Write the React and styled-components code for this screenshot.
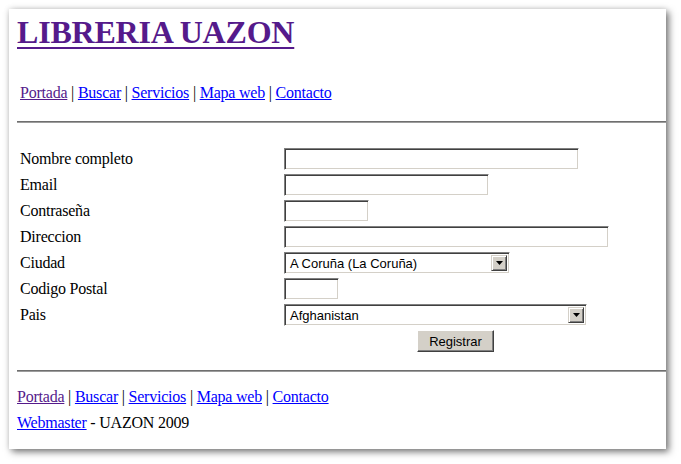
import { Fragment } from 'react';
import styled, { createGlobalStyle } from 'styled-components';

const GlobalStyle = createGlobalStyle`
  html, body {
    margin: 0;
    padding: 0;
    background: #ffffff;
  }
  body {
    font-family: "Liberation Serif", "Times New Roman", serif;
    font-size: 16px;
    letter-spacing: -0.22px;
    color: #000;
  }
`;

// Zona alrededor de la ventana (deja ver la sombra)
const Stage = styled.div`
  width: 681px;
  height: 464px;
  box-sizing: border-box;
  padding: 9px 0 0 9px;
  background: #ffffff;
`;

const BrowserWindow = styled.div`
  width: 657px;
  height: 440px;
  box-sizing: border-box;
  padding-left: 8px;
  background: #ffffff;
  overflow: hidden;
  box-shadow: 3px 3px 7px rgba(0, 0, 0, 0.5), 0 0 6px rgba(0, 0, 0, 0.14);
`;

const Title = styled.h1`
  margin: 0;
  padding-top: 5px;
  font-size: 32px;
  line-height: 37px;
  font-weight: bold;
  letter-spacing: -0.2px;
  white-space: nowrap;
`;

const TitleLink = styled.a`
  color: #551a8b;
  text-decoration: underline;
  text-decoration-thickness: 2px;
  text-underline-offset: 4px;
`;

const NavBar = styled.nav`
  margin-top: ${({ $top }) => $top}px;
  padding-left: ${({ $indent }) => $indent}px;
  line-height: 18px;
  white-space: nowrap;
`;

const NavLink = styled.a`
  color: ${({ $visited }) => ($visited ? '#551a8b' : '#0000ff')};
  text-decoration: underline;
`;

const Rule = styled.hr`
  margin: ${({ $top }) => $top}px 0 0 0;
  height: 0;
  border: none;
  border-top: 1px solid #6f6f6f;
  border-bottom: 1px solid #9c9c9c;
`;

const FormGrid = styled.form`
  margin-top: 23px;
  padding-left: 3px;
  display: grid;
  grid-template-columns: 264px 1fr;
  grid-auto-rows: 26px;
  align-items: center;
`;

const Label = styled.label`
  line-height: 18px;
  padding-bottom: 1px;
  white-space: nowrap;
`;

const sunken = `
  box-sizing: border-box;
  height: 22px;
  border: 1px solid;
  border-color: #808080 #ffffff #ffffff #808080;
  box-shadow: inset 1px 1px 0 #404040, inset -1px -1px 0 #d4d0c8;
  background: #ffffff;
`;

const TextInput = styled.input`
  ${sunken}
  width: ${({ $w }) => $w}px;
  margin: 0;
  padding: 2px 3px;
  font-family: "Liberation Sans", Arial, sans-serif;
  font-size: 13px;
  outline: none;
`;

const SelectBox = styled.div`
  ${sunken}
  width: ${({ $w }) => $w}px;
  display: flex;
  align-items: stretch;
  padding: 2px;
  font-family: "Liberation Sans", Arial, sans-serif;
  font-size: 13px;
  letter-spacing: 0;
`;

const SelectValue = styled.span`
  flex: 1;
  padding-left: 3px;
  line-height: 18px;
  white-space: nowrap;
  overflow: hidden;
`;

const ArrowButton = styled.span`
  width: 16px;
  box-sizing: border-box;
  display: flex;
  align-items: center;
  justify-content: center;
  background: #d4d0c8;
  border: 1px solid;
  border-color: #d4d0c8 #404040 #404040 #d4d0c8;
  box-shadow: inset 1px 1px 0 #ffffff, inset -1px -1px 0 #808080;
`;

const SubmitButton = styled.button`
  justify-self: start;
  margin: 0 0 0 ${({ $offset }) => $offset}px;
  width: 77px;
  height: 22px;
  padding: 0;
  background: #d4d0c8;
  color: #000;
  font-family: "Liberation Sans", Arial, sans-serif;
  font-size: 13px;
  border: 1px solid;
  border-color: #ffffff #404040 #404040 #ffffff;
  box-shadow: inset -1px -1px 0 #808080, inset 1px 1px 0 #d4d0c8;
`;

const Footer = styled.footer`
  margin-top: 16px;
  display: flex;
  flex-direction: column;
  gap: 8px;
`;

const FooterLine = styled.div`
  line-height: 18px;
  white-space: nowrap;
`;

const links = ['Portada', 'Buscar', 'Servicios', 'Mapa web', 'Contacto'];

const fields = [
  { label: 'Nombre completo', width: 295 },
  { label: 'Email', width: 205 },
  { label: 'Contraseña', width: 85, type: 'password' },
  { label: 'Direccion', width: 325 },
  { label: 'Ciudad', width: 226, select: 'A Coruña (La Coruña)' },
  { label: 'Codigo Postal', width: 55 },
  { label: 'Pais', width: 303, select: 'Afghanistan' }
];

const Arrow = () => (
  <svg width="7" height="4" viewBox="0 0 7 4" aria-hidden="true">
    <path d="M0 0h7L3.5 4z" fill="#000" />
  </svg>
);

const Links = () =>
  links.map((name, i) => (
    <span key={name}>
      {i > 0 && ' | '}
      <NavLink href="#" $visited={i === 0}>{name}</NavLink>
    </span>
  ));

export default function App() {
  return (
    <>
      <GlobalStyle />
      <Stage>
        <BrowserWindow>
          <Title>
            <TitleLink href="#">LIBRERIA UAZON</TitleLink>
          </Title>

          <NavBar $top={33} $indent={3}>
            <Links />
          </NavBar>

          <Rule $top={19} />

          <FormGrid onSubmit={(e) => e.preventDefault()}>
            {fields.map((f) => (
              <Fragment key={f.label}>
                <Label>{f.label}</Label>
                {f.select ? (
                  <SelectBox $w={f.width}>
                    <SelectValue>{f.select}</SelectValue>
                    <ArrowButton>
                      <Arrow />
                    </ArrowButton>
                  </SelectBox>
                ) : (
                  <TextInput type={f.type || 'text'} $w={f.width} />
                )}
              </Fragment>
            ))}
            <span />
            <SubmitButton type="submit" $offset={133}>Registrar</SubmitButton>
          </FormGrid>

          <Rule $top={16} />

          <Footer>
            <FooterLine>
              <Links />
            </FooterLine>
            <FooterLine>
              <NavLink href="#">Webmaster</NavLink> - UAZON 2009
            </FooterLine>
          </Footer>
        </BrowserWindow>
      </Stage>
    </>
  );
}
